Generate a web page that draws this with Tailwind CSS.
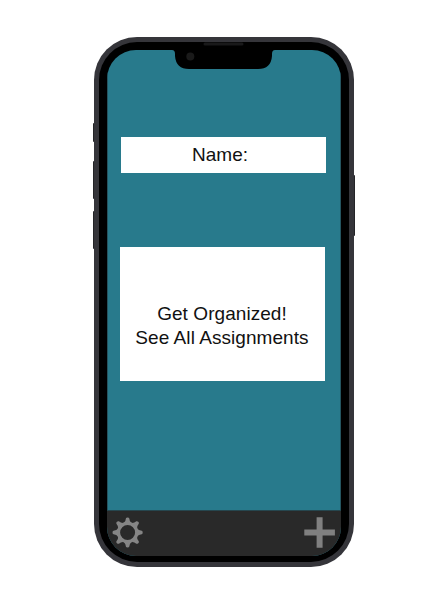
<!DOCTYPE html>
<html lang="en">
<head>
<meta charset="utf-8">
<title>Organizer</title>
<script src="https://cdn.jsdelivr.net/npm/@tailwindcss/browser@4"></script>
</head>
<body class="w-[431px] h-[600px] overflow-hidden bg-white pl-[94px] pt-[37px] font-['Liberation_Sans',Arial,sans-serif] text-[19px] leading-6 text-[#111]">
<div class="relative w-[260px] h-[530px]">
  <!-- side buttons -->
  <span class="absolute -left-[1px] top-[86px] w-1 h-[19px] bg-[#242427] rounded-l-[1px]"></span>
  <span class="absolute -left-[1px] top-[124px] w-1 h-[38px] bg-[#242427] rounded-l-[1px]"></span>
  <span class="absolute -left-[1px] top-[174px] w-1 h-[38px] bg-[#242427] rounded-l-[1px]"></span>
  <span class="absolute -right-[1px] top-[138px] w-1 h-[61px] bg-[#242427] rounded-r-[1px]"></span>
  <!-- frame -->
  <div class="relative w-full h-full rounded-[43px] bg-[#35353a] p-[5px]">
    <div class="relative w-full h-full rounded-[38px] bg-black pt-[8px] px-[8px] pb-[6px]">
      <main class="w-full h-full rounded-[29px] overflow-hidden bg-[#287a8c] flex flex-col">
        <div class="flex-1 border-x border-[#25545f] pt-[87px] pl-[13px]">
          <div class="w-[205px] h-[36px] bg-white flex items-center justify-center"><span class="-translate-x-[3.5px]">Name:</span></div>
          <div class="w-[205px] h-[134px] mt-[74px] -ml-[1px] bg-white flex flex-col items-center pt-[55px] whitespace-nowrap">
            <p class="-translate-x-[0.5px] tracking-[0.06px]">Get Organized!</p>
            <p class="-translate-x-[0.5px] tracking-[0.06px]">See All Assignments</p>
          </div>
        </div>
        <footer class="h-[46px] shrink-0 bg-[#292929] border-t border-[#26464e] flex items-start justify-between px-[5px] pt-[5px]">
          <svg class="w-8 h-8" viewBox="-15.6 -16.5 32 32" fill="none" stroke="#858585">
            <circle r="9.1" stroke-width="3.2"/>
            <g fill="#858585" stroke="none">
              <path id="tooth" d="M-3.9-9.5Q-1.9-11-1.7-14.1Q-1.5-15.1 0-15.1Q1.5-15.1 1.7-14.1Q1.9-11 3.9-9.5Z"/>
              <use href="#tooth" transform="rotate(45)"/>
              <use href="#tooth" transform="rotate(90)"/>
              <use href="#tooth" transform="rotate(135)"/>
              <use href="#tooth" transform="rotate(180)"/>
              <use href="#tooth" transform="rotate(225)"/>
              <use href="#tooth" transform="rotate(270)"/>
              <use href="#tooth" transform="rotate(315)"/>
            </g>
          </svg>
          <svg class="w-8 h-8" viewBox="-15.6 -16.5 32 32" fill="none" stroke="#808080" stroke-width="6"><path d="M-15.3 0H15.3M0-15.3V15.3"/></svg>
        </footer>
      </main>
      <!-- notch with camera and speaker -->
      <svg class="absolute left-[72px] top-0 w-[105px] h-[30px]" viewBox="0 0 105 30">
        <path fill="#000" d="M0 8H1Q4 8 4 12V14Q5 27 18 27H87Q100 27 101 14V12Q101 8 104 8H105V0H0Z"/>
        <circle cx="19.3" cy="14.5" r="4" fill="#1a1a1a"/>
        <rect x="32.5" y=".6" width="40" height="3" rx="1.5" fill="#19191a"/>
      </svg>
    </div>
  </div>
</div>
</body>
</html>
